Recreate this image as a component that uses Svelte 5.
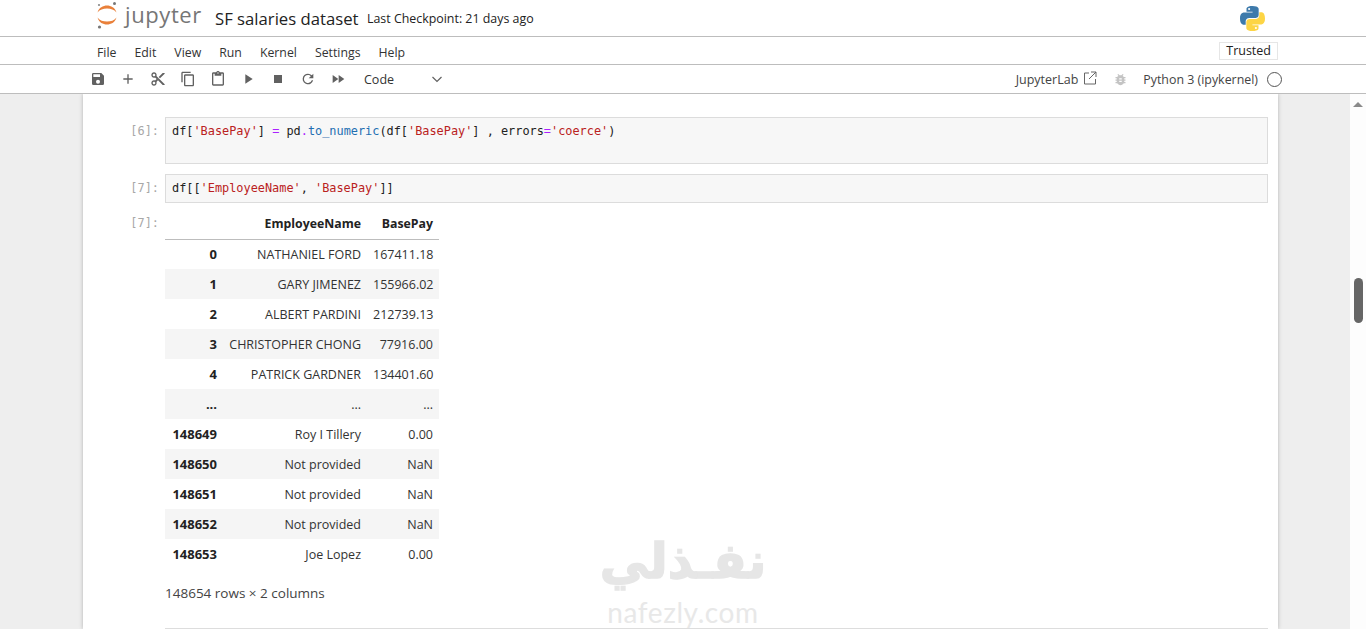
<script>
	const head = [
		["0", "NATHANIEL FORD", "167411.18"],
		["1", "GARY JIMENEZ", "155966.02"],
		["2", "ALBERT PARDINI", "212739.13"],
		["3", "CHRISTOPHER CHONG", "77916.00"],
		["4", "PATRICK GARDNER", "134401.60"],
		["...", "...", "..."],
		["148649", "Roy I Tillery", "0.00"],
		["148650", "Not provided", "NaN"],
		["148651", "Not provided", "NaN"],
		["148652", "Not provided", "NaN"],
		["148653", "Joe Lopez", "0.00"],
	];
	const menu = ["File", "Edit", "View", "Run", "Kernel", "Settings", "Help"];
	const tools = [
		"M17 3H5a2 2 0 0 0-2 2v14a2 2 0 0 0 2 2h14a2 2 0 0 0 2-2V7l-4-4zm-5 16a3 3 0 1 1 0-6 3 3 0 0 1 0 6zm3-10H5V5h10v4z",
		"M19 13h-6v6h-2v-6H5v-2h6V5h2v6h6v2z",
		"M9.64 7.64c.23-.5.36-1.05.36-1.64 0-2.21-1.79-4-4-4S2 3.79 2 6s1.79 4 4 4c.59 0 1.14-.13 1.64-.36L10 12l-2.36 2.36C7.14 14.13 6.59 14 6 14c-2.21 0-4 1.79-4 4s1.79 4 4 4 4-1.79 4-4c0-.59-.13-1.14-.36-1.64L12 14l7 7h3v-1L9.64 7.64zM6 8c-1.1 0-2-.89-2-2s.9-2 2-2 2 .89 2 2-.9 2-2 2zm0 12c-1.1 0-2-.89-2-2s.9-2 2-2 2 .89 2 2-.9 2-2 2zm6-7.5c-.28 0-.5-.22-.5-.5s.22-.5.5-.5.5.22.5.5-.22.5-.5.5zM19 3l-6 6 2 2 7-7V3z",
		"M16 1H4c-1.1 0-2 .9-2 2v14h2V3h12V1zm3 4H8c-1.1 0-2 .9-2 2v14c0 1.1.9 2 2 2h11c1.1 0 2-.9 2-2V7c0-1.1-.9-2-2-2zm0 16H8V7h11v14z",
		"M19 2h-4.18C14.4.84 13.3 0 12 0c-1.3 0-2.4.84-2.82 2H5c-1.1 0-2 .9-2 2v16c0 1.1.9 2 2 2h14c1.1 0 2-.9 2-2V4c0-1.1-.9-2-2-2zm-7 0c.55 0 1 .45 1 1s-.45 1-1 1-1-.45-1-1 .45-1 1-1zm7 18H5V4h2v3h10V4h2v16z",
		"M8 5v14l11-7z",
		"M6 6h12v12H6z",
		"M17.65 6.35A7.96 7.96 0 0 0 12 4a8 8 0 1 0 7.73 10h-2.08A6 6 0 1 1 12 6c1.66 0 3.14.69 4.22 1.78L13 11h7V4l-2.35 2.35z",
		"M4 18l8.5-6L4 6v12zm9-12v12l8.5-6L13 6z",
	];
</script>

<div class="page">
	<header class="top">
		<div class="logo">
			<svg width="22" height="30" viewBox="0 0 22 30">
				<path d="M1.5 12.5C3 7.5 7 5.5 11 5.500C15 5.500 19 7.500 20.500 12.500C18 9.500 15 8.500 11 8.500C7 8.500 4 9.500 1.500 12.500Z" fill="#e9803a" />
				<path d="M1.500 17.500C3 22.500 7 24.500 11 24.500C15 24.500 19 22.500 20.500 17.500C18 20.500 15 21.500 11 21.500C7 21.500 4 20.500 1.500 17.500Z" fill="#e9803a" />
				<circle cx="18.500" cy="3.500" r="1.500" fill="#777" />
				<circle cx="3" cy="5" r="1.100" fill="#888" />
				<circle cx="3.500" cy="27" r="1.600" fill="#777" />
			</svg>
			<span class="wordmark">jupyter</span>
		</div>
		<span class="nbname">SF salaries dataset</span>
		<span class="checkpoint">Last Checkpoint: 21 days ago</span>
		<svg class="python" width="25" height="25" viewBox="0 0 110 110">
			<path fill="#3d7aab" d="M54.900 0C26.900 0 28.600 12.200 28.600 12.200l0 12.600h26.700v3.800H18s-18-2-18 26.300 15.700 27.300 15.700 27.300h9.400V69s-.5-15.700 15.500-15.700h26.600s15 .2 15-14.500V14.500S84.600 0 54.900 0zM40.100 8.500a4.800 4.800 0 1 1 0 9.600 4.800 4.800 0 0 1 0-9.600z" />
			<path fill="#fdd545" transform="rotate(180 55 55)" d="M54.900 0C26.900 0 28.600 12.200 28.600 12.200l0 12.600h26.700v3.800H18s-18-2-18 26.300 15.700 27.300 15.700 27.300h9.400V69s-.5-15.700 15.500-15.700h26.600s15 .2 15-14.500V14.500S84.600 0 54.900 0zM40.100 8.500a4.800 4.800 0 1 1 0 9.600 4.800 4.800 0 0 1 0-9.600z" />
		</svg>
	</header>

	<nav class="menubar">
		{#each menu as item}
			<span class="item">{item}</span>
		{/each}
		<span class="trusted">Trusted</span>
	</nav>

	<div class="toolbar">
		<div class="tools">
			{#each tools as d}
				<svg width="16" height="16" viewBox="0 0 24 24"><path {d} fill="#616161" /></svg>
			{/each}
		</div>
		<span class="celltype">Code</span>
		<svg class="chevron" width="12" height="12" viewBox="0 0 12 12"><path d="M1.500 4L6 8.500L10.500 4" fill="none" stroke="#616161" stroke-width="1.200" /></svg>
		<div class="right">
			<span>JupyterLab</span>
			<svg class="ext" width="14" height="14" viewBox="0 0 14 14"><path d="M6 2H1.500V13H12.500V8M8 1H13V6M13 1L6 8" fill="none" stroke="#666" stroke-width="1" /></svg>
			<svg class="bug" width="15" height="15" viewBox="0 0 24 24"><path fill="#c4c4c4" d="M20 8h-2.810a5.985 5.985 0 0 0-1.820-1.960L17 4.410 15.590 3l-2.170 2.170C12.960 5.060 12.490 5 12 5c-.49 0-.96.06-1.410.17L8.410 3 7 4.410l1.620 1.630C7.880 6.550 7.260 7.220 6.810 8H4v2h2.090c-.05.33-.09.66-.09 1v1H4v2h2v1c0 .34.04.67.09 1H4v2h2.810c1.040 1.790 2.970 3 5.190 3s4.150-1.210 5.190-3H20v-2h-2.090c.05-.33.09-.66.09-1v-1h2v-2h-2v-1c0-.34-.04-.67-.09-1H20V8zm-6 8h-4v-2h4v2zm0-4h-4v-2h4v2z" /></svg>
			<span class="kernel">Python 3 (ipykernel)</span>
			<span class="status"></span>
		</div>
	</div>

	<main class="site">
		<div class="notebook">
			<div class="cell first">
				<div class="prompt">[6]:</div>
				<pre class="input tall"><span>df[</span><span class="s">'BasePay'</span><span>] </span><span class="o">=</span><span> pd</span><span class="o">.</span><span class="f">to_numeric</span><span>(df[</span><span class="s">'BasePay'</span><span>] , errors</span><span class="o">=</span><span class="s">'coerce'</span><span>)</span></pre>
			</div>
			<div class="cell second">
				<div class="prompt">[7]:</div>
				<pre class="input"><span>df[[</span><span class="s">'EmployeeName'</span><span>, </span><span class="s">'BasePay'</span><span>]]</span></pre>
			</div>
			<div class="cell out">
				<div class="prompt">[7]:</div>
				<div class="output">
					<table>
						<thead>
							<tr><th></th><th>EmployeeName</th><th>BasePay</th></tr>
						</thead>
						<tbody>
							{#each head as row}
								<tr><th>{row[0]}</th><td>{row[1]}</td><td>{row[2]}</td></tr>
							{/each}
						</tbody>
					</table>
					<p class="shape">148654 rows × 2 columns</p>
				</div>
			</div>
			<hr class="rule" />
		</div>
		<div class="scrollbar">
			<span class="arrow"></span>
			<span class="thumb"></span>
		</div>
		<div class="watermark">
			<span class="ar" lang="ar" dir="rtl">نفـذلي</span>
			<span class="en">nafezly.com</span>
		</div>
	</main>
</div>

<style>
	:global(body) {
		margin: 0;
		overflow: hidden;
	}

	.page {
		height: 629px;
		overflow: hidden;
		display: flex;
		flex-direction: column;
		font-family: "Open Sans", sans-serif;
		font-size: 13px;
		color: #333;
		background: #fff;
	}

	.top {
		height: 36px;
		flex: none;
		display: flex;
		align-items: center;
		padding-left: 96px;
		border-bottom: 1px solid #bdbdbd;
	}

	.logo {
		display: flex;
		align-items: center;
		width: 119px;
	}

	.logo svg {
		margin: -6px 7px 0 0;
	}

	.wordmark {
		font-size: 22px;
		letter-spacing: 0.6px;
		color: #767676;
		line-height: 30px;
		margin-top: -9px;
	}

	.nbname {
		font-size: 16.700px;
		color: #222;
		width: 152px;
	}

	.checkpoint {
		font-size: 12.400px;
		color: #222;
	}

	.python {
		margin-left: auto;
		margin-right: 101px;
	}

	.menubar {
		height: 27px;
		flex: none;
		display: flex;
		align-items: center;
		gap: 18px;
		padding-left: 97px;
		border-bottom: 1px solid #bdbdbd;
		font-size: 12.300px;
		color: #333;
	}

	.item {
		padding-top: 4px;
	}

	.trusted {
		margin-left: auto;
		margin-right: 88px;
		border: 1px solid #e6e6e6;
		padding: 0 6px;
		line-height: 16px;
		font-size: 12.500px;
		color: #222;
	}

	.toolbar {
		height: 28px;
		flex: none;
		display: flex;
		align-items: center;
		padding-left: 90px;
		border-bottom: 1px solid #bdbdbd;
	}

	.tools {
		display: flex;
		gap: 14px;
		width: 274px;
	}

	.celltype {
		font-size: 12.500px;
		width: 67px;
		color: #333;
	}

	.right {
		margin-left: auto;
		margin-right: 84px;
		display: flex;
		align-items: center;
		font-size: 12.500px;
		color: #444;
	}

	.ext {
		margin: -3px 0 0 5px;
	}

	.bug {
		margin: 0 15px 0 16px;
	}

	.kernel {
		font-size: 12.400px;
	}

	.status {
		width: 13px;
		height: 13px;
		border: 1px solid #555;
		border-radius: 50%;
		margin-left: 9px;
	}

	.site {
		flex: 1;
		min-height: 0;
		position: relative;
		background: #eee;
		padding-left: 83px;
		padding-right: 88px;
		overflow: hidden;
	}

	.notebook {
		background: #fff;
		height: 100%;
		box-shadow: 0 0 4px rgba(0, 0, 0, 0.25);
		padding: 23px 10px 0 0;
		box-sizing: border-box;
	}

	.cell {
		display: flex;
		margin-bottom: 10px;
	}

	.cell.second {
		margin-bottom: 6px;
	}

	.prompt {
		width: 76px;
		flex: none;
		text-align: right;
		font-family: "DejaVu Sans Mono", monospace;
		font-size: 11.900px;
		line-height: 29px;
		color: #a8a8a8;
		margin-right: 6px;
	}

	.input {
		flex: 1;
		margin: 0;
		box-sizing: border-box;
		height: 29px;
		padding: 6px;
		background: #f7f7f7;
		border: 1px solid #dcdcdc;
		font-family: "DejaVu Sans Mono", monospace;
		font-size: 11.880px;
		line-height: 15px;
		color: #222;
	}

	.input.tall {
		height: 47px;
	}

	.s {
		color: #ba2121;
	}

	.o {
		color: #a2f;
	}

	.f {
		color: #1f6fb2;
	}

	.out {
		margin-bottom: 0;
	}

	.out .prompt {
		line-height: 29px;
	}

	.output {
		flex: 1;
	}

	table {
		border-collapse: collapse;
		font-size: 12.500px;
		color: #333;
		table-layout: fixed;
		width: 274px;
	}

	th,
	td {
		box-sizing: border-box;
	}

	table th:nth-child(1) {
		width: 58px;
	}

	table th:nth-child(2) {
		width: 144px;
	}

	thead th {
		height: 30px;
		text-align: right;
		padding: 0 6px;
		color: #222;
		font-size: 12.300px;
		border-bottom: 1px solid #bdbdbd;
	}

	tbody tr {
		height: 30px;
	}

	tbody tr:nth-child(even) {
		background: #f5f5f5;
	}

	tbody th,
	tbody td {
		text-align: right;
		padding: 0 6px;
		white-space: nowrap;
	}

	tbody th {
		color: #222;
		font-size: 13px;
	}

	.shape {
		margin: 14px 0 0;
		font-size: 13.500px;
		line-height: 20px;
		color: #444;
	}

	.rule {
		border: none;
		border-top: 1px solid #ddd;
		margin: 25px 0 0 82px;
	}

	.scrollbar {
		position: absolute;
		top: 0;
		right: 0;
		bottom: 0;
		width: 16px;
		background: #fdfdfd;
	}

	.arrow {
		position: absolute;
		top: 8px;
		left: 3px;
		border: 5px solid transparent;
		border-top: none;
		border-bottom-color: #8a8a8a;
	}

	.thumb {
		position: absolute;
		top: 184px;
		left: 4px;
		width: 9px;
		height: 45px;
		border-radius: 5px;
		background: #666;
	}

	.watermark {
		position: absolute;
		left: 600px;
		top: 438px;
		width: 166px;
		display: flex;
		flex-direction: column;
		align-items: center;
		pointer-events: none;
	}

	.ar {
		font-family: "DejaVu Sans", sans-serif;
		font-weight: 700;
		font-size: 49px;
		line-height: 60px;
		color: #e6e6e6;
		-webkit-text-stroke: 1.500px #e6e6e6;
	}

	.en {
		font-family: "Lato", sans-serif;
		font-size: 28px;
		line-height: 28px;
		letter-spacing: 0.6px;
		margin-top: 6px;
		color: #e8e8e8;
	}
</style>
